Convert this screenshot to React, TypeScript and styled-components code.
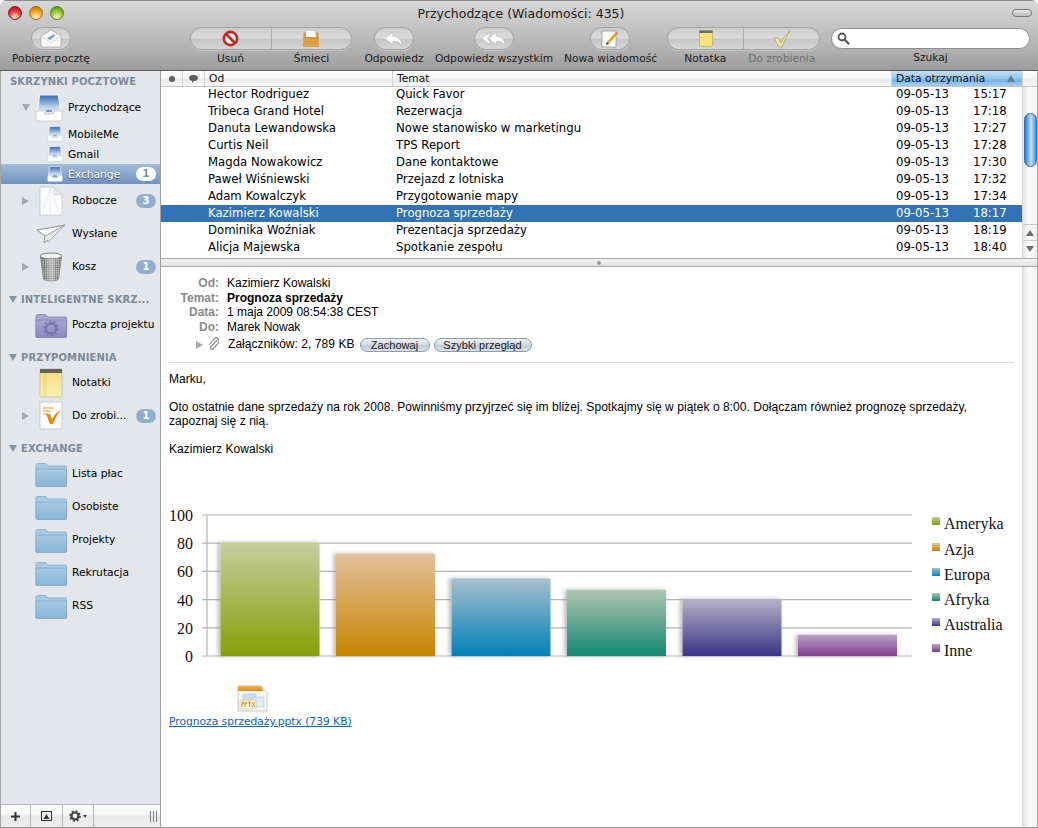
import React from "react";
import styled, { createGlobalStyle } from "styled-components";

const UI_FONT = `"DejaVu Sans", "Noto Sans", sans-serif`;
const BODY_FONT = `"Liberation Sans", Arial, sans-serif`;

const GlobalStyle = createGlobalStyle`
  * { box-sizing: border-box; }
  html, body { margin: 0; padding: 0; background: #fff; }
  body { font-family: ${UI_FONT}; }
`;

const Window = styled.div`
  width: 1038px;
  height: 828px;
  display: flex;
  flex-direction: column;
  overflow: hidden;
  border-radius: 6px 6px 0 0;
  background: #fff;
`;

/* ---------- toolbar ---------- */

const TitleBar = styled.div`
  height: 71px;
  flex: none;
  display: flex;
  flex-direction: column;
  border-top: 1px solid #8e8e8e;
  border-bottom: 1px solid #5a5a5a;
  background: linear-gradient(#d6d6d6 0%, #c8c8c8 30%, #aeaeae 75%, #9c9c9c 100%);
`;

const TitleRow = styled.div`
  height: 24px;
  flex: none;
  display: flex;
  align-items: center;
  padding: 0 6px 0 8px;
`;

const Lights = styled.div`
  display: flex;
  gap: 7px;
  width: 66px;
`;

const Light = styled.div<{ $c: string; $d: string }>`
  width: 14px;
  height: 14px;
  border-radius: 50%;
  border: 1px solid ${({ $d }) => $d};
  background: radial-gradient(circle at 50% 85%, #fff6c0 0%, ${({ $c }) => $c} 55%, ${({ $d }) => $d} 100%);
`;

const Title = styled.div`
  flex: 1;
  text-align: center;
  font-size: 12.5px;
  color: #1a1a1a;
  padding-right: 44px;
`;

const ZoomPill = styled.div`
  width: 20px;
  height: 8px;
  border-radius: 4px;
  border: 1px solid #777;
  background: linear-gradient(#e8e8e8, #bbb);
`;

const ToolRow = styled.div`
  flex: 1;
  display: flex;
  align-items: flex-start;
  padding-top: 2px;
`;

const ToolGroup = styled.div<{ $w: number; $ml?: number }>`
  width: ${({ $w }) => $w}px;
  margin-left: ${({ $ml }) => $ml || 0}px;
  flex: none;
  display: flex;
  flex-direction: column;
  align-items: center;
`;

const Capsule = styled.div<{ $w: number }>`
  width: ${({ $w }) => $w}px;
  height: 23px;
  display: flex;
  border-radius: 12px;
  border: 1px solid #a3a3a3;
  box-shadow: 0 1px 0 rgba(255, 255, 255, 0.25);
  background: linear-gradient(#cbcbcb 0%, #dcdcdc 46%, #c6c6c6 52%, #d6d6d6 100%);
`;

const CapsuleCell = styled.div`
  flex: 1;
  display: flex;
  align-items: center;
  justify-content: center;
  & + & { border-left: 1px solid #adadad; }
`;

const ToolLabels = styled.div`
  align-self: stretch;
  display: flex;
  margin-top: 1px;
`;

const ToolLabel = styled.div<{ $dim?: boolean }>`
  flex: 1;
  text-align: center;
  font-size: 10.7px;
  line-height: 16px;
  white-space: nowrap;
  color: ${({ $dim }) => ($dim ? "#6f6f6f" : "#1c1c1c")};
`;

const SearchBox = styled.div`
  width: 199px;
  height: 21px;
  margin-top: 1px;
  border-radius: 11px;
  background: #fff;
  border: 1px solid #8d8d8d;
  display: flex;
  align-items: center;
  padding-left: 5px;
`;

/* ---------- main ---------- */

const Main = styled.div`
  flex: 1;
  min-height: 0;
  display: flex;
`;

const Sidebar = styled.div`
  width: 161px;
  flex: none;
  display: flex;
  flex-direction: column;
  background: #e3e7eb;
  border-left: 1px solid #a6a6a6;
  border-right: 1px solid #a0a0a0;
`;

const SideScroll = styled.div`
  flex: 1;
  min-height: 0;
`;

const SectionHead = styled.div<{ $first?: boolean }>`
  height: ${({ $first }) => ($first ? 20 : 25)}px;
  display: flex;
  align-items: flex-end;
  padding: 0 0 ${({ $first }) => ($first ? 3 : 2)}px ${({ $first }) => ($first ? 9 : 8)}px;
  font-size: 10px;
  line-height: 13px;
  font-weight: bold;
  letter-spacing: 0.12px;
  color: #7b8a9d;
  white-space: nowrap;
`;

const SectionArrow = styled.span`
  width: 0;
  height: 0;
  margin: 0 4px 3px 0;
  border-left: 4px solid transparent;
  border-right: 4px solid transparent;
  border-top: 7px solid #87949f;
`;

const SideRow = styled.div<{ $big?: boolean; $selected?: boolean }>`
  height: ${({ $big }) => ($big ? 33 : 20)}px;
  display: flex;
  align-items: center;
  padding: 0 4px 0 21px;
  font-size: 10.7px;
  color: ${({ $selected }) => ($selected ? "#fff" : "#000")};
  background: ${({ $selected }) =>
    $selected ? "linear-gradient(#a5bdd9, #6f93bd)" : "transparent"};
  text-shadow: ${({ $selected }) => ($selected ? "0 1px 1px #33527a" : "none")};
`;

const ArrowSlot = styled.div`
  width: 12px;
  flex: none;
`;

const RightArrow = styled.div`
  width: 0;
  height: 0;
  border-top: 4px solid transparent;
  border-bottom: 4px solid transparent;
  border-left: 7px solid #a3a9b0;
`;

const DownArrow = styled.div`
  width: 0;
  height: 0;
  border-left: 4px solid transparent;
  border-right: 4px solid transparent;
  border-top: 7px solid #a3a9b0;
`;

const IconSlot = styled.div<{ $w: number; $small?: boolean }>`
  width: ${({ $w }) => $w}px;
  flex: none;
  display: flex;
  justify-content: ${({ $small }) => ($small ? "flex-end" : "center")};
  padding-right: ${({ $small }) => ($small ? 5 : 4)}px;
`;

const SideLabel = styled.div`
  flex: 1;
  min-width: 0;
  white-space: nowrap;
  overflow: hidden;
`;

const Badge = styled.div<{ $light?: boolean }>`
  width: 20px;
  height: 14px;
  flex: none;
  border-radius: 7px;
  text-align: center;
  font-size: 10px;
  line-height: 14px;
  font-weight: bold;
  text-shadow: none;
  color: ${({ $light }) => ($light ? "#6f93bd" : "#fff")};
  background: ${({ $light }) => ($light ? "#fff" : "#93aecd")};
`;

const SideFooter = styled.div`
  height: 24px;
  flex: none;
  display: flex;
  border-top: 1px solid #b9b9b9;
  border-bottom: 1px solid #8f8f8f;
  background: linear-gradient(#fdfdfd 0%, #f4f4f4 45%, #e9e9e9 50%, #eeeeee 100%);
`;

const FootButton = styled.div<{ $w: number }>`
  width: ${({ $w }) => $w}px;
  flex: none;
  display: flex;
  align-items: center;
  justify-content: center;
  gap: 2px;
  border-right: 1px solid #b5b5b5;
`;

const Grip = styled.div`
  flex: 1;
  display: flex;
  align-items: center;
  justify-content: flex-end;
  padding-right: 3px;
  gap: 2px;
`;

const GripLine = styled.span`
  width: 1px;
  height: 11px;
  background: #7d7d7d;
`;

const Content = styled.div`
  flex: 1;
  min-width: 0;
  display: flex;
  flex-direction: column;
  border-bottom: 1px solid #9a9a9a;
  border-right: 1px solid #a6a6a6;
`;

const ListArea = styled.div`
  height: 187px;
  flex: none;
  display: flex;
  flex-direction: column;
  overflow: hidden;
`;

const Columns = styled.div`
  display: grid;
  grid-template-columns: 22px 22px 188px 499px 131px;
`;

const HeaderRow = styled(Columns)`
  height: 16px;
  flex: none;
  position: relative;
  z-index: 1;
  font-size: 10.7px;
  line-height: 15px;
  color: #111;
  border-bottom: 1px solid #c4c4c4;
  background: linear-gradient(#ffffff 0%, #f3f3f3 50%, #e9e9e9 60%, #f8f8f8 100%);
`;

const HeadCell = styled.div<{ $active?: boolean }>`
  display: flex;
  align-items: center;
  justify-content: ${({ $active }) => ($active ? "space-between" : "flex-start")};
  padding: 0 4px;
  border-right: 1px solid #d2d2d2;
  background: ${({ $active }) =>
    $active ? "linear-gradient(#c6e0f6 0%, #93c5ee 50%, #74b3ea 60%, #a4d0f3 100%)" : "none"};
`;

const HeadIcon = styled(HeadCell)`
  justify-content: center;
  padding: 0;
`;

const HeadDot = styled.span`
  width: 6px;
  height: 6px;
  border-radius: 50%;
  background: #5f5f5f;
`;

const SortArrow = styled.span`
  width: 0;
  height: 0;
  margin-right: 3px;
  border-left: 4px solid transparent;
  border-right: 4px solid transparent;
  border-bottom: 7px solid #5e7f9e;
`;

const ListBody = styled.div`
  flex: 1;
  min-height: 0;
  display: flex;
`;

const ListRows = styled.div`
  width: 861px;
  flex: none;
  margin-top: -1px;
`;

const MailRow = styled(Columns)<{ $selected?: boolean }>`
  height: 17px;
  font-size: 11.7px;
  line-height: 17px;
  white-space: nowrap;
  color: ${({ $selected }) => ($selected ? "#fff" : "#000")};
  background: ${({ $selected }) => ($selected ? "#3273b5" : "#fff")};
`;

const MailCell = styled.div`
  padding-left: 3px;
`;

const DateCell = styled.div`
  padding-left: 4px;
  display: flex;
`;

const DatePart = styled.span`
  width: 77px;
`;

const ScrollTrack = styled.div`
  flex: 1;
  display: flex;
  flex-direction: column;
  align-items: center;
  padding-bottom: 2px;
  border-left: 1px solid #d8d8d8;
  background: linear-gradient(90deg, #e2e2e2, #fafafa 40%, #f2f2f2);
`;

const ScrollThumb = styled.div`
  width: 13px;
  height: 54px;
  margin-top: 26px;
  border-radius: 7px;
  border: 1px solid #2f6fb5;
  background: linear-gradient(90deg, #2d78c9 0%, #79b6ea 30%, #c2e2f8 55%, #6eaee6 85%, #3f86d2 100%);
`;

const ScrollGap = styled.div`
  flex: 1;
`;

const ScrollButton = styled.div`
  width: 100%;
  height: 16px;
  flex: none;
  display: flex;
  align-items: center;
  justify-content: center;
  border-top: 1px solid #c9c9c9;
  background: linear-gradient(90deg, #e6e6e6, #fdfdfd 50%, #ececec);
`;

const TinyUp = styled.span`
  width: 0;
  height: 0;
  border-left: 4px solid transparent;
  border-right: 4px solid transparent;
  border-bottom: 6px solid #6d6d6d;
`;

const TinyDown = styled.span`
  width: 0;
  height: 0;
  border-left: 4px solid transparent;
  border-right: 4px solid transparent;
  border-top: 6px solid #6d6d6d;
`;

const Splitter = styled.div`
  height: 9px;
  flex: none;
  display: flex;
  align-items: center;
  justify-content: center;
  border-top: 1px solid #a9a9a9;
  border-bottom: 1px solid #a9a9a9;
  background: linear-gradient(#f4f4f4, #e2e2e2);
`;

const SplitDot = styled.span`
  width: 4px;
  height: 4px;
  border-radius: 50%;
  background: #9a9a9a;
`;

const Reader = styled.div`
  flex: 1;
  min-height: 0;
  display: flex;
`;

const ReaderBody = styled.div`
  width: 861px;
  flex: none;
  padding: 9px 8px 0 8px;
  font-family: ${BODY_FONT};
  font-size: 12px;
  line-height: 14.5px;
  color: #000;
`;

const ReaderTrack = styled.div`
  flex: 1;
  border-left: 1px solid #dcdcdc;
  background: linear-gradient(90deg, #e4e4e4, #fafafa 45%, #f4f4f4);
`;

const MetaRow = styled.div`
  display: flex;
  align-items: center;
`;

const MetaName = styled.div`
  width: 50px;
  margin-right: 8px;
  text-align: right;
  font-weight: bold;
  color: #8a8a8a;
`;

const Subject = styled.div`
  font-weight: bold;
`;

const AttachRow = styled(MetaRow)`
  margin-top: 3px;
  height: 15px;
  letter-spacing: 0.05px;
`;

const AttachIcons = styled.div`
  width: 50px;
  margin-right: 9px;
  display: flex;
  justify-content: flex-end;
  align-items: center;
  gap: 5px;
`;

const PillRow = styled.div`
  display: flex;
  gap: 4px;
  margin-left: 5px;
`;

const PillButton = styled.div<{ $w: number }>`
  width: ${({ $w }) => $w}px;
  height: 14px;
  border-radius: 7px;
  border: 1px solid #8f9cad;
  text-align: center;
  font-size: 11px;
  line-height: 12px;
  color: #222;
  background: linear-gradient(#eef1f5 0%, #d3dae3 50%, #c3ccd8 55%, #dbe1e8 100%);
`;

const Rule = styled.div`
  height: 1px;
  margin: 10px 0 9px 0;
  background: #dfdfdf;
`;

const Paragraph = styled.p`
  margin: 0 0 14px 0;
  line-height: 14px;
  letter-spacing: 0.05px;
`;

const ChartWrap = styled.div`
  margin: 40px 0 0 -8px;
  height: 166px;
`;

const FileBox = styled.div`
  display: flex;
  flex-direction: column;
  align-items: flex-start;
  margin-top: 23px;
`;

const FileIcon = styled.div`
  margin-left: 68px;
  height: 28px;
`;

const FileLink = styled.a`
  margin-top: 2px;
  font-family: ${UI_FONT};
  font-size: 10.7px;
  line-height: 14px;
  color: #0b63b8;
  text-decoration: underline;
`;

/* ---------- icons ---------- */

const MailFetchIcon = () => (
  <svg width="22" height="19" viewBox="0 0 22 19">
    <path d="M1 7 11 1l10 6v11H1z" fill="#f8f8f8" stroke="#a5a5a5" strokeWidth=".7" />
    <path d="M1 7l10 7 10-7" fill="none" stroke="#cfcfcf" strokeWidth=".8" />
    <path d="M7 9.500 14 5l1 2-5 4z" fill="#6f9fdc" />
  </svg>
);

const DeleteIcon = () => (
  <svg width="17" height="17" viewBox="0 0 17 17">
    <circle cx="8.500" cy="8.500" r="6.600" fill="#f4f4f4" stroke="#c42a20" strokeWidth="2.600" />
    <path d="M4 4l9 9" stroke="#c42a20" strokeWidth="2.600" />
  </svg>
);

const JunkIcon = () => (
  <svg width="18" height="18" viewBox="0 0 18 18">
    <path d="M4 0.500h9.500l1 7H3.500z" fill="#fafafa" stroke="#b5b5b5" strokeWidth=".5" />
    <path d="M1.500 2.500H4l-.5 5h11l-.8-5h2.800l.5 14.500H1z" fill="#d69a42" />
    <path d="M1.300 8h15.400l.3 9H1z" fill="#e2a24a" />
    <path d="M1.500 8h15" stroke="#b67a22" strokeWidth=".8" />
    <path d="M2 11c4 1.500 10 1.500 14 0" fill="none" stroke="#c98a30" strokeWidth=".6" />
  </svg>
);

const ReplyIcon = ({ double }: { double?: boolean }) => (
  <svg width={double ? 26 : 20} height="16" viewBox={double ? "0 0 24 14" : "0 0 18 14"}>
    {double && <path d="M8 1 1 6.500 8 12V9l-2.500-2.500L8 4z" fill="#fff" stroke="#a8a8a8" strokeWidth=".4" />}
    <path
      d={double ? "M14 1 7 6.500l7 5.500V9c4 0 6 1 8 4 0-5-3-8-8-8.500z" : "M8 1 1 6.500 8 12V9c4 0 6 1 8 4 0-5-3-8-8-8.500z"}
      fill="#fff"
      stroke="#a8a8a8"
      strokeWidth=".4"
    />
  </svg>
);

const NewMailIcon = () => (
  <svg width="20" height="20" viewBox="0 0 20 20">
    <path d="M2 2h14v16H2z" fill="#fafafa" stroke="#8c8c8c" strokeWidth=".7" />
    <path d="M7 13 15 4l2 1.600-8 9-3 1.400z" fill="#e8a317" />
    <path d="M15 4l1.200-1.300 2 1.600L17 5.600z" fill="#e0705f" />
    <path d="M7 13l-1 3 3-1.400z" fill="#333" />
  </svg>
);

const NoteIcon = () => (
  <svg width="14" height="17" viewBox="0 0 14 17">
    <rect x=".5" y=".5" width="13" height="16" rx="1.500" fill="#f7e27e" stroke="#b3a255" strokeWidth=".6" />
    <rect x=".5" y=".5" width="13" height="2.500" fill="#6b6b6b" />
  </svg>
);

const CheckIcon = () => (
  <svg width="18" height="18" viewBox="0 0 18 18">
    <path d="M1 8h4l3 5c2-5 5-9 9-12-3 5-6 10-8 16H6z" fill="#ece4a8" stroke="#a59a5f" strokeWidth=".7" />
  </svg>
);

const SearchIcon = () => (
  <svg width="13" height="13" viewBox="0 0 13 13">
    <circle cx="5" cy="5" r="3.500" fill="none" stroke="#555" strokeWidth="1.800" />
    <path d="M8 8l3.500 3.500" stroke="#555" strokeWidth="2.200" strokeLinecap="round" />
  </svg>
);

const InboxIcon = ({ id, size }: { id: string; size: number }) => (
  <svg width={size} height={size} viewBox="0 0 28 28">
    <defs>
      <linearGradient id={id} x1="0" y1="0" x2="0" y2="1">
        <stop offset="0" stopColor="#3566b4" />
        <stop offset=".8" stopColor="#c4d9ee" />
      </linearGradient>
    </defs>
    <path d="M4.500 1h19l2 16h-23z" fill={`url(#${id})`} stroke="#f6f7f9" strokeWidth="1.200" />
    <path d="M11 16h6v2h-6z" fill="#6f9bd0" />
    <path
      d="M1 17h7.500l1.500 3h8l1.500-3H27v9a1 1 0 0 1-1 1H2a1 1 0 0 1-1-1z"
      fill="#fdfdfd"
      stroke="#b4b9bf"
      strokeWidth=".6"
    />
  </svg>
);

const DraftIcon = () => (
  <svg width="24" height="30" viewBox="0 0 24 30">
    <path d="M1 1h14l8 8v20H1z" fill="#fcfcfc" stroke="#c3c6ca" strokeWidth=".8" />
    <path d="M15 1v8h8z" fill="#e8e8e8" stroke="#c3c6ca" strokeWidth=".5" />
    <path d="M11 2 4 27M11 2l9 25M11 2v25" stroke="#b8c6dc" strokeWidth=".6" strokeDasharray="1 1.200" />
  </svg>
);

const PlaneIcon = () => (
  <svg width="30" height="24" viewBox="0 0 30 20">
    <path d="M1 6 29 1 12 18l-3-6z" fill="#fbfbfb" stroke="#7e7e7e" strokeWidth=".7" />
    <path d="M29 1 9 12l-1 7 4-3" fill="#e6e6e6" stroke="#7e7e7e" strokeWidth=".7" />
    <path d="M29 1 1 6l8 6" fill="none" stroke="#909090" strokeWidth=".5" />
  </svg>
);

const TrashIcon = () => (
  <svg width="24" height="32" viewBox="0 0 24 32">
    <defs>
      <pattern id="mesh" width="2.200" height="2.200" patternUnits="userSpaceOnUse">
        <rect width="2.200" height="2.200" fill="#b5b5b5" />
        <circle cx="1.100" cy="1.100" r=".85" fill="#2c2c2c" />
      </pattern>
      <linearGradient id="meshShine" x1="0" y1="0" x2="1" y2="0">
        <stop offset="0" stopColor="#fff" stopOpacity=".1" />
        <stop offset=".55" stopColor="#fff" stopOpacity=".55" />
        <stop offset="1" stopColor="#fff" stopOpacity=".1" />
      </linearGradient>
    </defs>
    <ellipse cx="12" cy="5" rx="11" ry="3" fill="#f1f1f1" stroke="#666" strokeWidth=".8" />
    <path d="M1.500 6 4.500 28c1 2.500 14 2.500 15 0L22.500 6c-3 2.500-18 2.500-21 0z" fill="url(#mesh)" stroke="#666" strokeWidth=".6" />
    <path d="M1.500 6 4.500 28c1 2.500 14 2.500 15 0L22.500 6c-3 2.500-18 2.500-21 0z" fill="url(#meshShine)" />
  </svg>
);

const FolderIcon = ({ id, top, bottom, line, gear }: { id: string; top: string; bottom: string; line: string; gear?: boolean }) => (
  <svg width="32" height="28" viewBox="0 0 32 28">
    <defs>
      <linearGradient id={id} x1="0" y1="0" x2="0" y2="1">
        <stop offset="0" stopColor={top} />
        <stop offset="1" stopColor={bottom} />
      </linearGradient>
    </defs>
    <path d="M1 5a1.500 1.500 0 0 1 1.500-1.500h8l2.500 2.500h17.500A1.500 1.500 0 0 1 31.500 7.500V26H1z" fill={top} stroke={line} strokeWidth=".7" />
    <path d="M1 9h30.500v16a1.500 1.500 0 0 1-1.500 1.500H2.500A1.500 1.500 0 0 1 1 25z" fill={`url(#${id})`} stroke={line} strokeWidth=".7" />
    {gear && (
      <g>
        <circle cx="16" cy="17.500" r="5" fill="none" stroke="#7c76ad" strokeWidth="2.500" />
        <circle cx="16" cy="17.500" r="7" fill="none" stroke="#7c76ad" strokeWidth="1.800" strokeDasharray="2.200 2.200" />
      </g>
    )}
  </svg>
);

const NotesIcon = () => (
  <svg width="24" height="30" viewBox="0 0 24 30">
    <defs>
      <linearGradient id="pad" x1="0" y1="0" x2="0" y2="1">
        <stop offset="0" stopColor="#f4da7d" />
        <stop offset="1" stopColor="#fbf2ad" />
      </linearGradient>
    </defs>
    <rect x="1" y="1" width="22" height="28" rx="1.500" fill="url(#pad)" stroke="#b5ab80" strokeWidth=".6" />
    <rect x="1" y="1" width="22" height="4" fill="#66625a" />
    <path d="M5 5v24M7 5v24" stroke="#d9c56a" strokeWidth=".6" />
  </svg>
);

const TodoIcon = () => (
  <svg width="24" height="29" viewBox="0 0 24 29">
    <rect x="1" y="1" width="22" height="27" fill="#fcfcfc" stroke="#bfbfbf" strokeWidth=".7" />
    <path d="M4 7h10M4 10h8M4 13h5" stroke="#e89a2a" strokeWidth="1.100" />
    <path d="M7 13h4l2 5c2-4 5-7 9-9-4 4-6 9-8 14h-3z" fill="#ee8a1a" />
  </svg>
);

const PptxIcon = () => (
  <svg width="31" height="28" viewBox="0 0 31 28">
    <defs>
      <linearGradient id="pptxHead" x1="0" y1="0" x2="0" y2="1">
        <stop offset="0" stopColor="#f6b24a" />
        <stop offset="1" stopColor="#df8a12" />
      </linearGradient>
    </defs>
    <path d="M1 1h23l6 6v19H1z" fill="#f8f8f8" stroke="#a9a9a9" strokeWidth=".6" />
    <path d="M1 1h23l2.500 5H1z" fill="url(#pptxHead)" />
    <rect x="6" y="9" width="13" height="9" fill="#cfe0f2" stroke="#9fb6cf" strokeWidth=".5" />
    <rect x="15" y="12" width="12" height="10" fill="#dfe9f4" stroke="#a9bccf" strokeWidth=".5" />
    <rect x="3" y="15" width="16" height="9" fill="#fbf4e4" stroke="#c2ad84" strokeWidth=".4" />
    <path d="M5 22v-5h1.500v2H5M8 22v-5h1.500v2H8M11 17h3M12.500 17v5M15 17l3 5M18 17l-3 5" fill="none" stroke="#e0900f" strokeWidth=".9" />
  </svg>
);

const PaperclipIcon = () => (
  <svg width="11" height="15" viewBox="0 0 11 15">
    <path d="M8.500 3 3 10a1.700 1.700 0 0 0 2.500 2.200L10 6a3 3 0 0 0-4.500-4L1.500 8" fill="none" stroke="#8c8c8c" strokeWidth="1.200" transform="rotate(4 5 7)" />
  </svg>
);

const BubbleIcon = () => (
  <svg width="9" height="8" viewBox="0 0 9 8">
    <ellipse cx="4.500" cy="3" rx="4.500" ry="3" fill="#5f5f5f" />
    <path d="M3 5h3L3 8z" fill="#5f5f5f" />
  </svg>
);

const GearIcon = () => (
  <svg width="12" height="12" viewBox="0 0 12 12">
    <circle cx="6" cy="6" r="3.500" fill="none" stroke="#444" strokeWidth="2.200" />
    <circle cx="6" cy="6" r="5" fill="none" stroke="#444" strokeWidth="1.600" strokeDasharray="2 1.900" />
  </svg>
);

const MoreArrow = styled.span`
  width: 0;
  height: 0;
  border-left: 2.5px solid transparent;
  border-right: 2.5px solid transparent;
  border-top: 3px solid #444;
`;

const PlusIcon = () => (
  <svg width="9" height="9" viewBox="0 0 9 9">
    <path d="M4.500 0v9M0 4.500h9" stroke="#333" strokeWidth="2" />
  </svg>
);

const PhotoIcon = () => (
  <svg width="11" height="10" viewBox="0 0 11 10">
    <rect x=".5" y=".5" width="10" height="9" fill="#eee" stroke="#333" />
    <path d="M2.500 8 5.500 3l3 5z" fill="#333" />
  </svg>
);

/* ---------- chart ---------- */

const BARS = [
  { name: "Ameryka", value: 80.5, top: "#c6cd9f", bottom: "#86a006" },
  { name: "Azja", value: 72.5, top: "#e1c19b", bottom: "#c98500" },
  { name: "Europa", value: 55, top: "#a8bfce", bottom: "#0081b6" },
  { name: "Afryka", value: 47, top: "#aec4b1", bottom: "#138872" },
  { name: "Australia", value: 40.5, top: "#b6b2c8", bottom: "#3c3388" },
  { name: "Inne", value: 15, top: "#b9a2c4", bottom: "#7d3d8e" },
];

const LEGEND_Y = [524, 550, 575, 600, 625, 651];
const GRID = [100, 80, 60, 40, 20, 0];
const UNIT = 1.41;

const SalesChart = () => (
  <svg width="860" height="170" viewBox="161 496 860 170">
    <defs>
      {BARS.map((bar, i) => (
        <linearGradient key={bar.name} id={`bar-${i}`} x1="0" y1="0" x2="0" y2="1">
          <stop offset="0" stopColor={bar.top} />
          <stop offset="1" stopColor={bar.bottom} />
        </linearGradient>
      ))}
      <filter id="barShadow" x="-15%" y="-15%" width="130%" height="125%">
        <feGaussianBlur stdDeviation="2" />
      </filter>
      <filter id="barSoft" x="-5%" y="-5%" width="110%" height="110%">
        <feGaussianBlur stdDeviation=".5" />
      </filter>
    </defs>
    {GRID.map((v) => {
      const y = 656 - v * UNIT;
      return (
        <g key={v}>
          <line x1="202" x2="912" y1={y} y2={y} stroke="#b4b4b4" strokeWidth="1.200" />
          <text x="193" y={y + 6} textAnchor="end" fontFamily="Liberation Serif" fontSize="16" fill="#111">
            {v}
          </text>
        </g>
      );
    })}
    <line x1="207" x2="207" y1="515" y2="656" stroke="#b4b4b4" strokeWidth="1.200" />
    {BARS.map((bar, i) => {
      const x = 220.5 + i * 115.5;
      const h = bar.value * UNIT;
      return (
        <g key={bar.name}>
          <rect x={x - 2.500} y={656 - h} width="100" height={h} fill="#8a8a8a" opacity=".6" filter="url(#barShadow)" />
          <rect x={x} y={656 - h} width="99" height={h} fill="#fff" />
          <rect x={x} y={656 - h} width="99" height={h} fill={`url(#bar-${i})`} filter="url(#barSoft)" />
        </g>
      );
    })}
    {BARS.map((bar, i) => (
      <g key={bar.name}>
        <rect x="932" y={LEGEND_Y[i] - 7} width="8" height="8" fill={`url(#bar-${i})`} />
        <text x="944" y={LEGEND_Y[i] + 5} fontFamily="Liberation Serif" fontSize="16" fill="#111">
          {bar.name}
        </text>
      </g>
    ))}
  </svg>
);

/* ---------- data ---------- */

const MAILS = [
  ["Hector Rodriguez", "Quick Favor", "15:17"],
  ["Tribeca Grand Hotel", "Rezerwacja", "17:18"],
  ["Danuta Lewandowska", "Nowe stanowisko w marketingu", "17:27"],
  ["Curtis Neil", "TPS Report", "17:28"],
  ["Magda Nowakowicz", "Dane kontaktowe", "17:30"],
  ["Paweł Wiśniewski", "Przejazd z lotniska", "17:32"],
  ["Adam Kowalczyk", "Przygotowanie mapy", "17:34"],
  ["Kazimierz Kowalski", "Prognoza sprzedaży", "18:17"],
  ["Dominika Woźniak", "Prezentacja sprzedaży", "18:19"],
  ["Alicja Majewska", "Spotkanie zespołu", "18:40"],
];

const SELECTED_MAIL = 7;

const PLAIN_FOLDERS = ["Lista płac", "Osobiste", "Projekty", "Rekrutacja", "RSS"];

export default function App() {
  return (
    <>
      <GlobalStyle />
      <Window>
        <TitleBar>
          <TitleRow>
            <Lights>
              <Light $c="#e0303a" $d="#8c1a1e" />
              <Light $c="#f0a020" $d="#a56a10" />
              <Light $c="#8cc030" $d="#5a7f18" />
            </Lights>
            <Title>Przychodzące (Wiadomości: 435)</Title>
            <ZoomPill />
          </TitleRow>
          <ToolRow>
            <ToolGroup $w={102}>
              <Capsule $w={40}>
                <CapsuleCell><MailFetchIcon /></CapsuleCell>
              </Capsule>
              <ToolLabels><ToolLabel>Pobierz pocztę</ToolLabel></ToolLabels>
            </ToolGroup>
            <ToolGroup $w={162} $ml={88}>
              <Capsule $w={162}>
                <CapsuleCell><DeleteIcon /></CapsuleCell>
                <CapsuleCell><JunkIcon /></CapsuleCell>
              </Capsule>
              <ToolLabels>
                <ToolLabel>Usuń</ToolLabel>
                <ToolLabel>Śmieci</ToolLabel>
              </ToolLabels>
            </ToolGroup>
            <ToolGroup $w={60} $ml={12}>
              <Capsule $w={40}>
                <CapsuleCell><ReplyIcon /></CapsuleCell>
              </Capsule>
              <ToolLabels><ToolLabel>Odpowiedz</ToolLabel></ToolLabels>
            </ToolGroup>
            <ToolGroup $w={120} $ml={10}>
              <Capsule $w={40}>
                <CapsuleCell><ReplyIcon double /></CapsuleCell>
              </Capsule>
              <ToolLabels><ToolLabel>Odpowiedz wszystkim</ToolLabel></ToolLabels>
            </ToolGroup>
            <ToolGroup $w={92} $ml={10}>
              <Capsule $w={40}>
                <CapsuleCell><NewMailIcon /></CapsuleCell>
              </Capsule>
              <ToolLabels><ToolLabel>Nowa wiadomość</ToolLabel></ToolLabels>
            </ToolGroup>
            <ToolGroup $w={153} $ml={11}>
              <Capsule $w={153}>
                <CapsuleCell><NoteIcon /></CapsuleCell>
                <CapsuleCell><CheckIcon /></CapsuleCell>
              </Capsule>
              <ToolLabels>
                <ToolLabel>Notatka</ToolLabel>
                <ToolLabel $dim>Do zrobienia</ToolLabel>
              </ToolLabels>
            </ToolGroup>
            <ToolGroup $w={199} $ml={11}>
              <SearchBox><SearchIcon /></SearchBox>
              <ToolLabels><ToolLabel>Szukaj</ToolLabel></ToolLabels>
            </ToolGroup>
          </ToolRow>
        </TitleBar>

        <Main>
          <Sidebar>
            <SideScroll>
              <SectionHead $first>SKRZYNKI POCZTOWE</SectionHead>
              <SideRow $big>
                <ArrowSlot><DownArrow /></ArrowSlot>
                <IconSlot $w={34}><InboxIcon id="inbox0" size={28} /></IconSlot>
                <SideLabel>Przychodzące</SideLabel>
              </SideRow>
              <SideRow>
                <ArrowSlot />
                <IconSlot $w={34} $small><InboxIcon id="inbox1" size={16} /></IconSlot>
                <SideLabel>MobileMe</SideLabel>
              </SideRow>
              <SideRow>
                <ArrowSlot />
                <IconSlot $w={34} $small><InboxIcon id="inbox2" size={16} /></IconSlot>
                <SideLabel>Gmail</SideLabel>
              </SideRow>
              <SideRow $selected>
                <ArrowSlot />
                <IconSlot $w={34} $small><InboxIcon id="inbox3" size={16} /></IconSlot>
                <SideLabel>Exchange</SideLabel>
                <Badge $light>1</Badge>
              </SideRow>
              <SideRow $big>
                <ArrowSlot><RightArrow /></ArrowSlot>
                <IconSlot $w={38}><DraftIcon /></IconSlot>
                <SideLabel>Robocze</SideLabel>
                <Badge>3</Badge>
              </SideRow>
              <SideRow $big>
                <ArrowSlot />
                <IconSlot $w={38}><PlaneIcon /></IconSlot>
                <SideLabel>Wysłane</SideLabel>
              </SideRow>
              <SideRow $big>
                <ArrowSlot><RightArrow /></ArrowSlot>
                <IconSlot $w={38}><TrashIcon /></IconSlot>
                <SideLabel>Kosz</SideLabel>
                <Badge>1</Badge>
              </SideRow>

              <SectionHead><SectionArrow />INTELIGENTNE SKRZ...</SectionHead>
              <SideRow $big>
                <ArrowSlot />
                <IconSlot $w={38}>
                  <FolderIcon id="smart" top="#a9a6d2" bottom="#8d88c4" line="#7f7ab0" gear />
                </IconSlot>
                <SideLabel>Poczta projektu</SideLabel>
              </SideRow>

              <SectionHead><SectionArrow />PRZYPOMNIENIA</SectionHead>
              <SideRow $big>
                <ArrowSlot />
                <IconSlot $w={38}><NotesIcon /></IconSlot>
                <SideLabel>Notatki</SideLabel>
              </SideRow>
              <SideRow $big>
                <ArrowSlot><RightArrow /></ArrowSlot>
                <IconSlot $w={38}><TodoIcon /></IconSlot>
                <SideLabel>Do zrobi...</SideLabel>
                <Badge>1</Badge>
              </SideRow>

              <SectionHead><SectionArrow />EXCHANGE</SectionHead>
              {PLAIN_FOLDERS.map((name, i) => (
                <SideRow $big key={name}>
                  <ArrowSlot />
                  <IconSlot $w={38}>
                    <FolderIcon id={`folder-${i}`} top="#a8cbe4" bottom="#86b4d8" line="#7ba2c0" />
                  </IconSlot>
                  <SideLabel>{name}</SideLabel>
                </SideRow>
              ))}
            </SideScroll>
            <SideFooter>
              <FootButton $w={30}><PlusIcon /></FootButton>
              <FootButton $w={32}><PhotoIcon /></FootButton>
              <FootButton $w={31}><GearIcon /><MoreArrow /></FootButton>
              <Grip><GripLine /><GripLine /><GripLine /></Grip>
            </SideFooter>
          </Sidebar>

          <Content>
            <ListArea>
              <HeaderRow>
                <HeadIcon><HeadDot /></HeadIcon>
                <HeadIcon><BubbleIcon /></HeadIcon>
                <HeadCell>Od</HeadCell>
                <HeadCell>Temat</HeadCell>
                <HeadCell $active>Data otrzymania<SortArrow /></HeadCell>
              </HeaderRow>
              <ListBody>
                <ListRows>
                  {MAILS.map(([from, subject, time], i) => (
                    <MailRow key={from} $selected={i === SELECTED_MAIL}>
                      <span />
                      <span />
                      <MailCell>{from}</MailCell>
                      <MailCell>{subject}</MailCell>
                      <DateCell>
                        <DatePart>09-05-13</DatePart>
                        <span>{time}</span>
                      </DateCell>
                    </MailRow>
                  ))}
                </ListRows>
                <ScrollTrack>
                  <ScrollThumb />
                  <ScrollGap />
                  <ScrollButton><TinyUp /></ScrollButton>
                  <ScrollButton><TinyDown /></ScrollButton>
                </ScrollTrack>
              </ListBody>
            </ListArea>
            <Splitter><SplitDot /></Splitter>
            <Reader>
              <ReaderBody>
                <MetaRow><MetaName>Od:</MetaName>Kazimierz Kowalski</MetaRow>
                <MetaRow><MetaName>Temat:</MetaName><Subject>Prognoza sprzedaży</Subject></MetaRow>
                <MetaRow><MetaName>Data:</MetaName>1 maja 2009 08:54:38 CEST</MetaRow>
                <MetaRow><MetaName>Do:</MetaName>Marek Nowak</MetaRow>
                <AttachRow>
                  <AttachIcons><RightArrow /><PaperclipIcon /></AttachIcons>
                  Załączników: 2, 789 KB
                  <PillRow>
                    <PillButton $w={70}>Zachowaj</PillButton>
                    <PillButton $w={98}>Szybki przegląd</PillButton>
                  </PillRow>
                </AttachRow>
                <Rule />
                <Paragraph>Marku,</Paragraph>
                <Paragraph>
                  Oto ostatnie dane sprzedaży na rok 2008. Powinniśmy przyjrzeć się im bliżej. Spotkajmy się w piątek o 8:00. Dołączam również prognozę sprzedaży, zapoznaj się z nią.
                </Paragraph>
                <Paragraph>Kazimierz Kowalski</Paragraph>
                <ChartWrap><SalesChart /></ChartWrap>
                <FileBox>
                  <FileIcon><PptxIcon /></FileIcon>
                  <FileLink href="#">Prognoza sprzedaży.pptx (739 KB)</FileLink>
                </FileBox>
              </ReaderBody>
              <ReaderTrack />
            </Reader>
          </Content>
        </Main>
      </Window>
    </>
  );
}
